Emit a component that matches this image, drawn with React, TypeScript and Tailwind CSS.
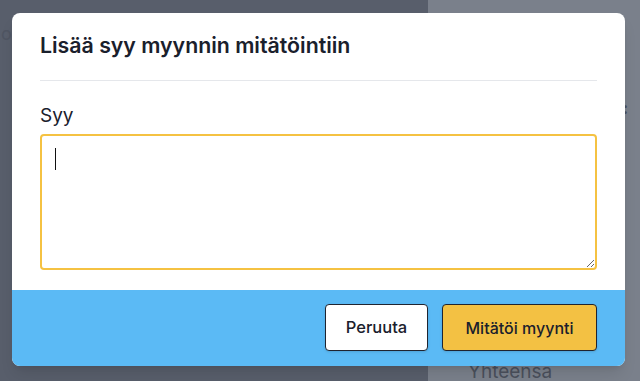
import React from "react";

export default function App(): React.JSX.Element {
  return (
    <div
      className="relative h-[381px] w-[640px] overflow-hidden"
      style={{ fontFamily: "Inter, 'Noto Sans', sans-serif" }}
    >
      {/* Page behind the overlay */}
      <div className="flex h-full">
        <div className="w-[428px] bg-[#585e6b] pt-[20px]">
          <span className="pl-[1px] text-[18px] text-[#4f5562]">o</span>
        </div>
        <div className="flex flex-1 flex-col bg-[#7a808b]">
          <div className="flex justify-end pr-[12px] pt-[96px] text-[16px] font-bold text-[#4a505c]">:</div>
          <div className="mt-auto pl-[40px] text-[19px] leading-[18px] text-[#4a505c]">Yhteensä</div>
        </div>
      </div>

      {/* Modal */}
      <div className="absolute left-[12px] top-[13px] flex w-[613px] flex-col overflow-hidden rounded-[8px] bg-white shadow-lg">
        <div className="px-[28px] pt-[17px]">
          <h2 className="border-b border-[#e5e7eb] pb-[20px] text-[21.3px] font-semibold leading-[30px] text-[#1a202c]">
            Lisää syy myynnin mitätöintiin
          </h2>
          <label className="mt-[22px] block text-[19px] leading-[26px] text-[#1a202c]">Syy</label>
          <div className="relative mt-[5px] mb-[20px]">
            <textarea className="block h-[136px] w-full resize-y rounded-[4px] border-2 border-[#f5c242] px-[13px] py-[12px] text-[16px] outline-none" />
            <span className="absolute left-[15px] top-[14px] h-[22px] w-[1px] bg-[#111]" />
          </div>
        </div>
        <div className="flex justify-end gap-[14px] bg-[#5bbaf5] px-[28px] pt-[14px] pb-[15px]">
          <button className="h-[47px] w-[103px] rounded-[4px] border border-[#1f2430] bg-white text-[16.5px] font-medium text-[#1a202c] shadow-sm">
            Peruuta
          </button>
          <button className="h-[47px] w-[155px] rounded-[4px] border border-[#1f2430] bg-[#f3c143] text-[16px] font-medium text-[#1a202c] shadow-sm">
            Mitätöi myynti
          </button>
        </div>
      </div>
    </div>
  );
}
